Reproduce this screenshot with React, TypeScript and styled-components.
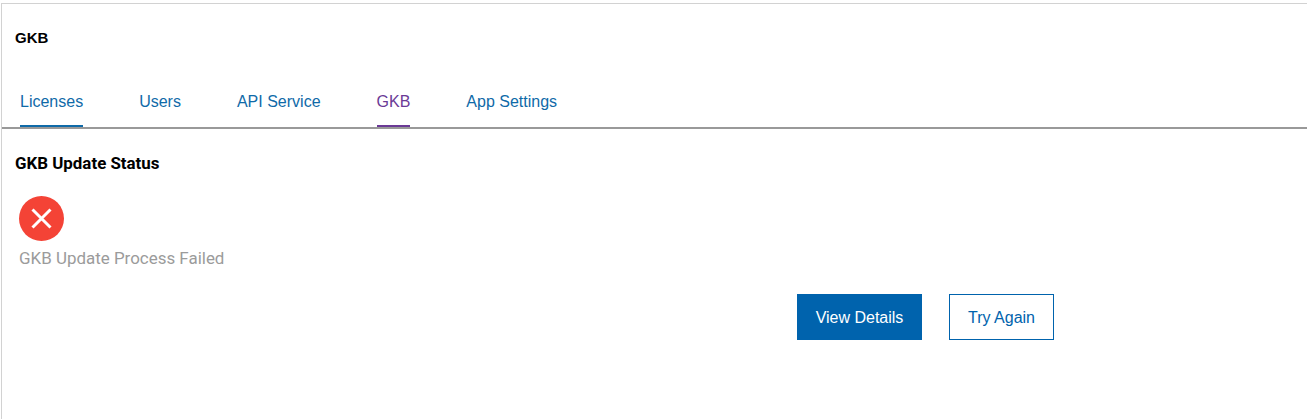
import React from "react";
import styled, { createGlobalStyle } from "styled-components";

const Global = createGlobalStyle`
  html, body { margin: 0; padding: 0; background: #fff; }
  body { font-family: Roboto, "Liberation Sans", sans-serif; overflow: hidden; }
`;

const Page = styled.div`
  width: 1307px;
  height: 419px;
  padding-top: 3px;
  box-sizing: border-box;
  background: #fff;
`;

const Panel = styled.main`
  height: 416px;
  margin-left: 1px;
  box-sizing: border-box;
  border-top: 1px solid #d2d2d2;
  border-left: 1px solid #d2d2d2;
  padding-top: 24px;
`;

const Title = styled.h1`
  margin: 0 0 0 13px;
  font-size: 15px;
  line-height: 20px;
  font-weight: 700;
  font-family: "Liberation Sans", Arial, sans-serif;
  color: #000;
`;

const TabBar = styled.nav`
  display: flex;
  gap: 56px;
  margin-top: 35px;
  padding-left: 18px;
  height: 44px;
  border-bottom: 2px solid #999;
`;

const Tab = styled.a<{ $color: string; $active?: boolean }>`
  display: block;
  box-sizing: border-box;
  height: 44px;
  padding-top: 9px;
  font-family: "Liberation Sans", Arial, sans-serif;
  font-size: 16px;
  line-height: 19px;
  color: ${(p) => p.$color};
  border-bottom: ${(p) => (p.$active ? `2px solid ${p.$color}` : "0")};
`;

const Section = styled.section`
  padding-left: 13px;
`;

const SectionTitle = styled.h2`
  margin: 25px 0 0;
  font-size: 16.9px;
  line-height: 19px;
  font-weight: 700;
  font-family: Roboto, sans-serif;
  color: #000;
`;

const StatusIcon = styled.svg`
  display: block;
  width: 45px;
  height: 45px;
  margin: 23px 0 0 4px;
`;

const StatusText = styled.p`
  margin: 7px 0 0 4px;
  font-size: 16.95px;
  line-height: 20px;
  color: #9b9b9b;
`;

const Actions = styled.div`
  display: flex;
  gap: 27px;
  margin: 26px 0 0 782px;
`;

const Button = styled.button<{ $primary?: boolean }>`
  height: 46px;
  width: ${(p) => (p.$primary ? "125px" : "105px")};
  box-sizing: border-box;
  padding: 1px 0 0;
  border: 1px solid #0063ad;
  border-radius: 0;
  background: ${(p) => (p.$primary ? "#0063ad" : "#fff")};
  color: ${(p) => (p.$primary ? "#fff" : "#0063ad")};
  font-family: "Liberation Sans", Arial, sans-serif;
  font-size: 16px;
`;

export default function App() {
  return (
    <Page>
      <Global />
      <Panel>
        <Title>GKB</Title>
        <TabBar>
          <Tab $color="#0f6aa8" $active>Licenses</Tab>
          <Tab $color="#0f6aa8">Users</Tab>
          <Tab $color="#0f6aa8">API Service</Tab>
          <Tab $color="#6b3a96" $active>GKB</Tab>
          <Tab $color="#0f6aa8">App Settings</Tab>
        </TabBar>
        <Section>
          <SectionTitle>GKB Update Status</SectionTitle>
          <StatusIcon viewBox="0 0 45 45">
            <circle cx="22.5" cy="22.5" r="22.5" fill="#f44336" />
            <path d="M13.5 13.5 L31.5 31.5 M31.5 13.5 L13.5 31.5" stroke="#fff" strokeWidth="3" fill="none" />
          </StatusIcon>
          <StatusText>GKB Update Process Failed</StatusText>
          <Actions>
            <Button $primary>View Details</Button>
            <Button>Try Again</Button>
          </Actions>
        </Section>
      </Panel>
    </Page>
  );
}
